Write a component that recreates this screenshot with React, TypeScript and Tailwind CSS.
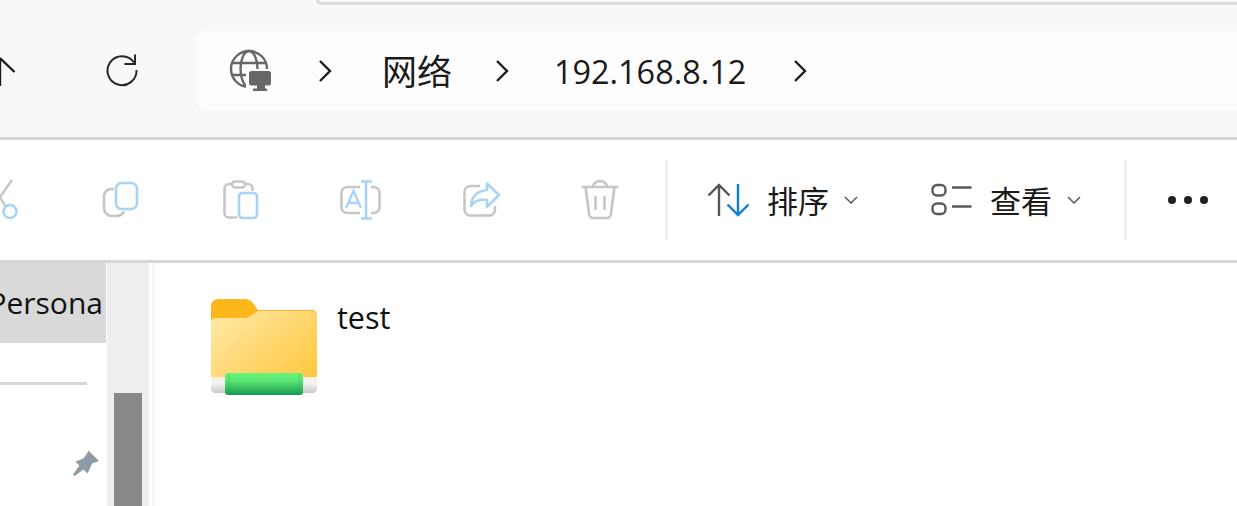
import React from "react";

const Chevron = ({ className }: { className: string }) => (
  <svg width="14" height="24" viewBox="0 0 14 24" fill="none" className={className}>
    <path d="M2 2 L12 12 L2 22" stroke="#1c1c1c" strokeWidth="2.4" />
  </svg>
);

const Small = ({ className }: { className: string }) => (
  <svg width="14" height="8" viewBox="0 0 14 8" fill="none" className={className}>
    <path d="M1 1 L7 7 L13 1" stroke="#5a5a5a" strokeWidth="1.5" />
  </svg>
);

const G = "#c6c6c6";
const B = "#a8d4f6";

const Folder = () => (
  <svg width="106" height="97" viewBox="0 0 106 97" fill="none" className="shrink-0">
    <defs>
      <linearGradient id="fr" x1="0" y1="0.1" x2="1" y2="0.9">
        <stop offset="0" stopColor="#ffe8a6" />
        <stop offset="1" stopColor="#ffc83f" />
      </linearGradient>
      <linearGradient id="bd" x1="0" y1="0" x2="0" y2="1">
        <stop offset="0" stopColor="#f8f1df" />
        <stop offset="0.35" stopColor="#f4f4f4" />
        <stop offset="1" stopColor="#c9c9c9" />
      </linearGradient>
      <linearGradient id="gr" x1="0" y1="0" x2="0" y2="1">
        <stop offset="0" stopColor="#68f47a" />
        <stop offset="0.35" stopColor="#5ae672" />
        <stop offset="1" stopColor="#169a50" />
      </linearGradient>
    </defs>
    <path d="M0 8 Q0 0 8 0 H34 Q39 0 42 4 L47 11 H101 Q106 11 106 17 V40 H0 Z" fill="#fdb71a" />
    <path d="M47 11 H101 Q106 11 106 17 V20 H40 Z" fill="#f1b636" />
    <path d="M0 23 Q0 19 5 19 H34 Q38 19 41 16 L47 12 H101 Q106 12 106 17 V80 H0 Z" fill="url(#fr)" />
    <path d="M0 78 H106 V89 Q106 94 101 94 H5 Q0 94 0 89 Z" fill="url(#bd)" />
    <rect x="14" y="74" width="78" height="22" rx="3" fill="url(#gr)" />
    <path d="M18 74 V96 M88 74 V96" stroke="#1f9a4f" strokeOpacity="0.25" strokeWidth="1" />
  </svg>
);

export default function App() {
  return (
    <div className="w-[1237px] h-[506px] overflow-hidden flex flex-col bg-white text-[#1a1a1a] font-['Open_Sans','Noto_Sans_CJK_SC',sans-serif]">
      {/* Navigation bar */}
      <div className="h-[140px] shrink-0 bg-[#f8f8f8] border-b-[3px] border-[#d6d6d6]">
        <div className="ml-[316px] h-[5px] border-b-[3px] border-l-[3px] border-[#dcdcdc] rounded-bl-[6px]" />
        <div className="flex items-center mt-[26px] h-[80px]">
          <svg width="17" height="32" viewBox="0 0 17 32" fill="none" className="shrink-0">
            <path d="M0 3 V31 M0 3 L14.5 17" stroke="#1c1c1c" strokeWidth="2.4" />
          </svg>
          <svg width="34" height="34" viewBox="0 0 34 34" fill="none" className="ml-[88px] shrink-0">
            <path
              d="M31.5 16 A14.5 14.5 0 1 1 29 8.5 M19.5 10 H30 V0.5"
              stroke="#262626"
              strokeWidth="2"
            />
          </svg>
          <div className="ml-[58px] flex-1 h-[80px] bg-[#fdfdfd] rounded-l-[10px] flex items-center">
            <svg width="44" height="44" viewBox="0 0 44 44" fill="none" className="ml-[32px] shrink-0">
              <g stroke="#676767" strokeWidth="2.4">
                <circle cx="20" cy="20" r="18" />
                <ellipse cx="20" cy="20" rx="8.5" ry="18" />
                <path d="M3 14 H37 M3 26 H37" />
              </g>
              <rect x="17" y="20" width="27" height="22" fill="#fdfdfd" />
              <rect x="20" y="22" width="22" height="14.5" rx="2.5" fill="#676767" />
              <path d="M28 36 H36 V39.5 H38 V42 H24 V39.5 H28 Z" fill="#676767" />
            </svg>
            <Chevron className="ml-[45px] shrink-0" />
            <span className="ml-[50px] mb-[4px] text-[35px] leading-none whitespace-nowrap font-['Noto_Sans_CJK_SC',sans-serif]">网络</span>
            <Chevron className="ml-[43px] shrink-0" />
            <span className="ml-[45px] text-[32.4px] leading-none whitespace-nowrap">192.168.8.12</span>
            <Chevron className="ml-[47px] shrink-0" />
          </div>
        </div>
      </div>

      {/* Command bar */}
      <div className="h-[123px] shrink-0 bg-white border-b-[3px] border-[#d6d6d6] flex items-center">
        <svg width="20" height="42" viewBox="0 0 20 42" fill="none" className="shrink-0">
          <path d="M12 1 L1.5 16 L0 18" stroke={G} strokeWidth="2.4" />
          <path d="M0 18 L5 27" stroke={G} strokeWidth="2.4" />
          <circle cx="10" cy="32.5" r="6.5" stroke={B} strokeWidth="2.6" />
        </svg>
        <svg width="38" height="38" viewBox="0 0 38 38" fill="none" className="ml-[82px] shrink-0">
          <path d="M12 8 H9 A7 7 0 0 0 2 15 V27 A8 8 0 0 0 10 35 H15 A8 8 0 0 0 22 30" stroke={G} strokeWidth="2.6" />
          <rect x="14" y="2" width="21" height="26" rx="5.5" stroke={B} strokeWidth="2.6" fill="#fdfdfd" />
        </svg>
        <svg width="38" height="40" viewBox="0 0 38 40" fill="none" className="ml-[83px] shrink-0">
          <path d="M9 4 H6 A4.5 4.5 0 0 0 1.5 8.5 V33 A4.5 4.5 0 0 0 6 37.5 H14 M22 4 H25 A4.5 4.5 0 0 1 29.5 8.5 V11" stroke={G} strokeWidth="2.6" />
          <rect x="9" y="1.5" width="13" height="6" rx="3" stroke={G} strokeWidth="2.4" />
          <rect x="16" y="13" width="18" height="25" rx="3.5" stroke={B} strokeWidth="2.6" />
        </svg>
        <svg width="42" height="40" viewBox="0 0 42 40" fill="none" className="ml-[79px] shrink-0">
          <path d="M20 7 H7 A6 6 0 0 0 1.5 13 V27 A6 6 0 0 0 7 33 H20 M31 7 H34 A6 6 0 0 1 39.5 13 V27 A6 6 0 0 1 34 33 H31" stroke={G} strokeWidth="2.6" />
          <path d="M26 1.5 V38.5 M21 1.5 H32 M21 38.5 H32" stroke={B} strokeWidth="2.6" />
          <path d="M6 28 L13.5 11 L21 28 M8.5 23 H18.5" stroke={B} strokeWidth="2.4" />
        </svg>
        <svg width="38" height="36" viewBox="0 0 38 36" fill="none" className="ml-[81px] shrink-0">
          <path d="M17 4 H7 A6 6 0 0 0 1.5 10 V28 A6 6 0 0 0 7 33.5 H26 A6 6 0 0 0 32 28 V24" stroke={G} strokeWidth="2.6" />
          <path d="M24 1.5 L36 13 L24 25 V18 C17 17 11 19 8 24 C8 15 14 9 24 8 Z" stroke={B} strokeWidth="2.6" strokeLinejoin="round" fill="#fff" />
        </svg>
        <svg width="38" height="40" viewBox="0 0 38 40" fill="none" className="ml-[80px] shrink-0">
          <g stroke={G} strokeWidth="2.6">
            <path d="M0.5 7 H37.5" />
            <path d="M12 7 A7 6 0 0 1 26 7" />
            <path d="M4.5 7 L8 33 A4.5 4.5 0 0 0 12.5 38 H25.5 A4.5 4.5 0 0 0 30 33 L33.5 7" />
            <path d="M14.5 16 V30 M23.5 16 V30" />
          </g>
        </svg>
        <div className="ml-[46px] w-[3px] h-[80px] bg-[#eeeeee] shrink-0" />
        <svg width="44" height="36" viewBox="0 0 44 36" fill="none" className="ml-[39px] shrink-0">
          <path d="M12 3 V34 M1.5 13.5 L12 3 L22.5 13.5" stroke="#555555" strokeWidth="2.4" />
          <path d="M31 2 V33 M20.5 22.5 L31 33 L41.5 22.5" stroke="#0a7fdc" strokeWidth="2.4" />
        </svg>
        <span className="ml-[16px] mb-[2px] text-[31px] leading-none whitespace-nowrap font-['Noto_Sans_CJK_SC',sans-serif]">排序</span>
        <Small className="ml-[15px] shrink-0" />
        <svg width="42" height="34" viewBox="0 0 42 34" fill="none" className="ml-[73px] shrink-0">
          <g stroke="#5a5a5a" strokeWidth="2.4">
            <rect x="1.5" y="2" width="13" height="10.5" rx="4.5" />
            <rect x="1.5" y="20.5" width="13" height="10.5" rx="4.5" />
            <path d="M21 4.5 H40.5 M21 23.5 H40.5" />
          </g>
        </svg>
        <span className="ml-[17px] mb-[2px] text-[31px] leading-none whitespace-nowrap font-['Noto_Sans_CJK_SC',sans-serif]">查看</span>
        <Small className="ml-[15px] shrink-0" />
        <div className="ml-[43px] w-[3px] h-[80px] bg-[#eeeeee] shrink-0" />
        <div className="ml-[41px] flex items-center gap-[8px] shrink-0">
          <div className="w-[8px] h-[8px] rounded-full bg-[#1f1f1f]" />
          <div className="w-[8px] h-[8px] rounded-full bg-[#1f1f1f]" />
          <div className="w-[8px] h-[8px] rounded-full bg-[#1f1f1f]" />
        </div>
      </div>

      {/* Lower area */}
      <div className="flex-1 flex min-h-0">
        <div className="w-[107px] shrink-0 flex flex-col overflow-hidden">
          <div className="h-[80px] w-[106px] bg-[#d9d9d9] flex items-center justify-end pr-[3px] overflow-hidden">
            <span className="text-[30px] leading-none whitespace-nowrap text-[#111111]">Persona</span>
          </div>
          <div className="mt-[39px] h-[3px] w-[87px] bg-[#d6d6d6] shrink-0" />
          <div className="mt-[65px] ml-[73px] shrink-0">
            <svg width="26" height="26" viewBox="0 0 26 26" fill="#8c9ba6">
              <path d="M15.7 0.7 L26 11 L19 13.5 L14.7 23.5 L10.5 19.5 L1.5 26 L0 24.5 L6.5 15.5 L2.3 11.7 L10.7 8.2 Z" />
            </svg>
          </div>
        </div>
        <div className="w-[42px] shrink-0 bg-[#eeeeee] pt-[130px] flex justify-center">
          <div className="w-[28px] h-full bg-[#888888]" />
        </div>
        <div className="ml-[3px] w-[3px] shrink-0 bg-[#f7f7f7]" />
        <div className="flex-1 flex items-start pl-[56px] pt-[36px]">
          <Folder />
          <span className="ml-[20px] text-[30.5px] leading-[36px] text-[#111111]">test</span>
        </div>
      </div>
    </div>
  );
}
